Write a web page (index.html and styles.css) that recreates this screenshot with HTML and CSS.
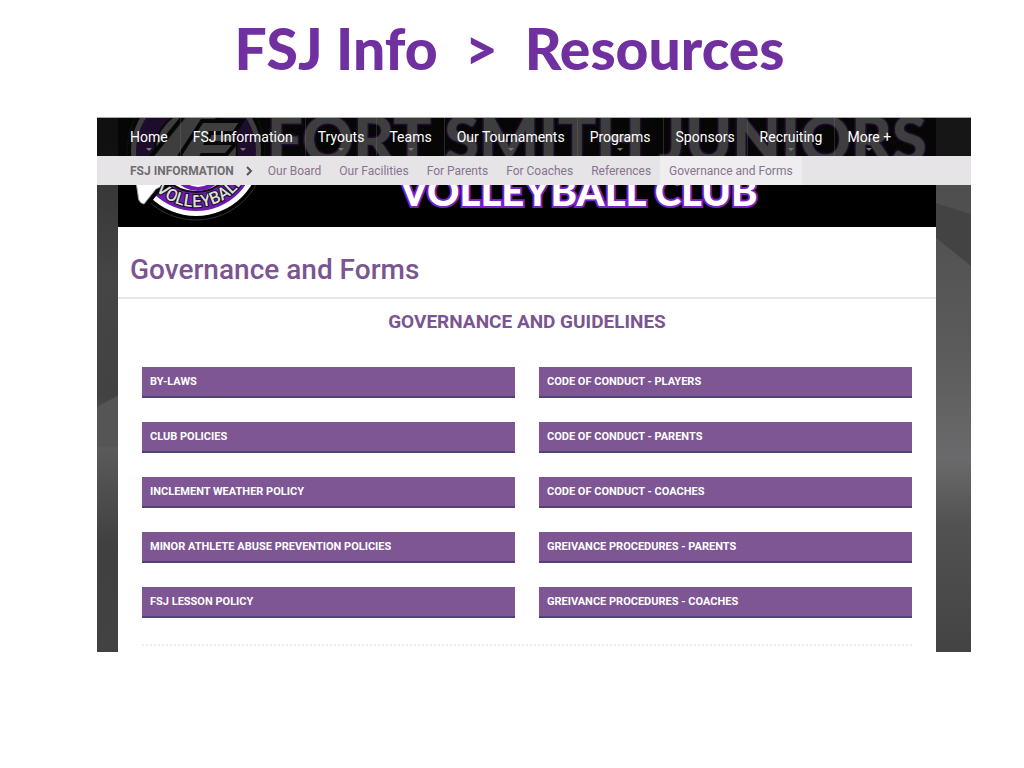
FILE: index.html
```
<!DOCTYPE html>
<html lang="en">
<head>
    <meta charset="UTF-8">
    <meta name="viewport" content="width=device-width, initial-scale=1.0">
    <title>FSJ Info - Resources</title>
    <link rel="stylesheet" href="styles.css">
</head>
<body>
    <h1 class="slide-title">FSJ Info &nbsp;&gt;&nbsp; Resources</h1>

    <div class="site">
        <svg class="backdrop" viewBox="0 0 874 535" preserveAspectRatio="none" aria-hidden="true">
            <defs>
                <linearGradient id="wallLeft" x1="0" y1="0" x2="0" y2="1">
                    <stop offset="0" stop-color="#2d2d2d"/>
                    <stop offset="0.3" stop-color="#454545"/>
                    <stop offset="0.52" stop-color="#424242"/>
                    <stop offset="0.62" stop-color="#5a5a5a"/>
                    <stop offset="0.8" stop-color="#404040"/>
                    <stop offset="1" stop-color="#424242"/>
                </linearGradient>
                <linearGradient id="wallRight" x1="0" y1="0" x2="0" y2="1">
                    <stop offset="0" stop-color="#484848"/>
                    <stop offset="0.45" stop-color="#5c5c5c"/>
                    <stop offset="0.64" stop-color="#6a6a6c"/>
                    <stop offset="0.76" stop-color="#525252"/>
                    <stop offset="1" stop-color="#434343"/>
                </linearGradient>
            </defs>
            <rect width="437" height="535" fill="url(#wallLeft)"/>
            <rect x="437" width="437" height="535" fill="url(#wallRight)"/>
            <path d="M0 290L22 278V330H0z" fill="#555"/>
            <path d="M838 86L874 97V149L838 120z" fill="#434343"/>
        </svg>

        <header class="site-header">
            <svg class="banner" viewBox="0 0 818 110" role="img" aria-label="Fort Smith Juniors Volleyball Club">
                <rect width="818" height="110" fill="#000"/>
                <circle cx="78" cy="34" r="69" fill="#000" stroke="#333" stroke-width="1"/>
                <circle cx="78" cy="34" r="65" fill="#fff"/>
                <circle cx="78" cy="34" r="60" fill="#6d1bb0"/>
                <circle cx="78" cy="34" r="41" fill="#fff" stroke="#111" stroke-width="2"/>
                <path d="M56 60Q80 84 104 60" fill="none" stroke="#6d1bb0" stroke-width="4"/>
                <path d="M34 42L68 0H98L66 58L38 72L26 87Q20 86 20 78L17 58z" fill="#fff" stroke="#000" stroke-width="9"/>
                <path d="M34 42L68 0H98L66 58L38 72L26 87Q20 86 20 78L17 58z" fill="#fff" stroke="#999" stroke-width="1"/>
                <path d="M62 38L84 4H124L116 16H92L88 26H118L108 38H84L74 58z" fill="#fff" stroke="#000" stroke-width="4"/>
                <path id="badgeCurve" d="M24 49A56 56 0 0 0 134 34" fill="none"/>
                <text class="badge-text"><textPath href="#badgeCurve" startOffset="28">VOLLEYBALL</textPath></text>
                <text class="club-name" x="149" y="45">FORT SMITH JUNIORS</text>
                <text class="club-type" x="282" y="89">VOLLEYBALL CLUB</text>
            </svg>

            <div class="menus">
                <nav class="main-nav">
                    <a href="#" class="has-menu">Home</a>
                    <a href="#" class="has-menu">FSJ Information</a>
                    <a href="#" class="has-menu">Tryouts</a>
                    <a href="#" class="has-menu">Teams</a>
                    <a href="#" class="has-menu">Our Tournaments</a>
                    <a href="#" class="has-menu">Programs</a>
                    <a href="#">Sponsors</a>
                    <a href="#" class="has-menu">Recruiting</a>
                    <a href="#" class="has-menu">More +</a>
                </nav>
                <nav class="sub-nav">
                    <strong>FSJ INFORMATION</strong>
                    <svg class="chevron" viewBox="0 0 8 10" aria-hidden="true"><path d="M2 1L6 5L2 9"/></svg>
                    <a href="#">Our Board</a>
                    <a href="#">Our Facilities</a>
                    <a href="#">For Parents</a>
                    <a href="#">For Coaches</a>
                    <a href="#">References</a>
                    <a href="#" class="active">Governance and Forms</a>
                </nav>
            </div>
        </header>

        <main class="content">
            <h2 class="page-title">Governance and Forms</h2>
            <h3 class="section-title">GOVERNANCE AND GUIDELINES</h3>
            <div class="documents">
                <a href="#">BY-LAWS</a>
                <a href="#">CODE OF CONDUCT - PLAYERS</a>
                <a href="#">CLUB POLICIES</a>
                <a href="#">CODE OF CONDUCT - PARENTS</a>
                <a href="#">INCLEMENT WEATHER POLICY</a>
                <a href="#">CODE OF CONDUCT - COACHES</a>
                <a href="#">MINOR ATHLETE ABUSE PREVENTION POLICIES</a>
                <a href="#">GREIVANCE PROCEDURES - PARENTS</a>
                <a href="#">FSJ LESSON POLICY</a>
                <a href="#">GREIVANCE PROCEDURES - COACHES</a>
            </div>
            <hr class="divider">
        </main>
    </div>
</body>
</html>
```
FILE: styles.css
```
* {
    margin: 0;
    padding: 0;
    box-sizing: border-box;
}

body {
    background: #fff;
    font-family: Roboto, "Open Sans", sans-serif;
}

a {
    color: inherit;
    text-decoration: none;
}

.slide-title {
    padding: 12px 5px 33px 0;
    color: #7030a0;
    font-family: Lato, sans-serif;
    font-size: 57px;
    font-weight: 900;
    line-height: 72px;
    text-align: center;
}

.site {
    position: relative;
    margin: 0 53px 0 97px;
}

.backdrop {
    position: absolute;
    inset: 0;
    width: 100%;
    height: 100%;
}

.site-header {
    position: relative;
    padding: 0 35px 0 21px;
}

.banner {
    display: block;
    width: 100%;
}

.club-name,
.club-type {
    fill: #fff;
    font-family: Lato, sans-serif;
    font-weight: 900;
}

.club-name {
    font-size: 63px;
    stroke: #6d1bb0;
    stroke-width: 3px;
    paint-order: stroke;
}

.club-type {
    font-size: 40px;
    stroke: #7a20c8;
    stroke-width: 4px;
    paint-order: stroke;
}

.badge-text {
    fill: #ddd;
    stroke: #111;
    stroke-width: 2px;
    paint-order: stroke;
    font-family: Roboto, sans-serif;
    font-size: 17px;
    font-weight: 500;
}

.menus {
    position: absolute;
    top: 0;
    left: 0;
    right: 0;
}

.main-nav {
    display: flex;
    height: 39px;
    padding-left: 21px;
    background: rgba(8, 8, 8, 0.78);
    border-top: 1px solid #aaa;
    color: #fff;
    font-size: 14px;
    line-height: 38px;
    white-space: nowrap;
}

.main-nav a {
    position: relative;
    padding: 0 12px;
    border-right: 1px solid rgba(120, 120, 120, 0.3);
}

.main-nav a:last-child {
    border-right: none;
}

.has-menu::after {
    content: "";
    position: absolute;
    bottom: 5px;
    left: 50%;
    margin-left: -3px;
    border: 3px solid transparent;
    border-top-color: #777;
    border-bottom: none;
}

.sub-nav {
    display: flex;
    height: 29px;
    padding-left: 33px;
    background: #e7e4e7;
    color: #85748e;
    font-size: 12px;
    line-height: 30px;
    white-space: nowrap;
}

.sub-nav strong {
    color: #706c70;
    font-weight: 700;
}

.sub-nav a {
    padding: 0 9px;
}

.sub-nav .active {
    background: #f0edf0;
}

.chevron {
    width: 8px;
    height: 10px;
    margin: 10px 6px 0 11px;
    fill: none;
    stroke: #555;
    stroke-width: 2;
}

.content {
    position: relative;
    margin: 0 35px 0 21px;
    background: #fff;
    color: #7b5591;
}

.page-title {
    height: 72px;
    padding: 22px 12px 0;
    border-bottom: 2px solid #e6e6e6;
    font-size: 28px;
    font-weight: 500;
    line-height: 42px;
}

.section-title {
    padding: 11px 0 33px;
    font-size: 19px;
    font-weight: 700;
    line-height: 24px;
    text-align: center;
}

.documents {
    display: grid;
    grid-template-columns: 1fr 1fr;
    gap: 24px;
    padding: 0 24px;
}

.documents a {
    padding: 1px 8px 0;
    background: #7d5693;
    border-bottom: 2px solid #514378;
    color: #fff;
    font-size: 11px;
    font-weight: 700;
    line-height: 28px;
}

.divider {
    margin: 26px 24px 0;
    border: none;
    border-top: 2px dotted #eee;
    padding-bottom: 6px;
}
```
